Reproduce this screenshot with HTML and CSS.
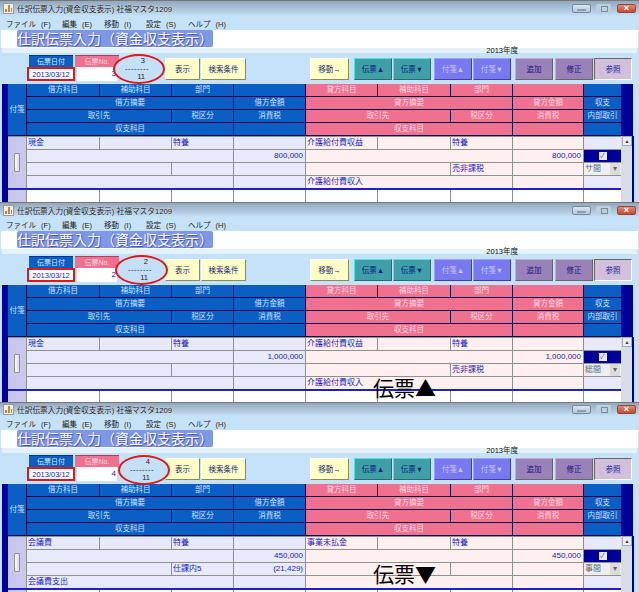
FILE: index.html
```html
<!DOCTYPE html>
<html lang="ja">
<head>
  <meta charset="UTF-8">
  <title>仕訳伝票入力</title>
  <link rel="stylesheet" href="styles.css">
</head>
<body>

  <section class="win win-1">
    <div class="titlebar">
      <svg class="app-icon" width="11" height="11" viewBox="0 0 11 11"><rect x="0.5" y="0.5" width="10" height="10" fill="#f4efe4" stroke="#9a9a9a"/><path d="M2 9V6h2v3zM5 9V2h2v7zM8 9V5h1v4z" fill="#c08a3c"/></svg>
      <span class="title-text">仕訳伝票入力(資金収支表示) 社福マスタ1209</span>
      <span class="ctl ctl-min"></span><span class="ctl ctl-max"></span><span class="ctl ctl-close">×</span>
    </div>
    <nav class="menu"><span>ファイル (F)</span><span>編集 (E)</span><span>移動 (I)</span><span>設定 (S)</span><span>ヘルプ (H)</span></nav>
    <div class="band"><h1>仕訳伝票入力（資金収支表示）</h1></div>
    <div class="yearbar"><span>2013年度</span></div>
    <div class="toolbar">
      <div class="field field-date"><span class="lbl lbl-blue">伝票日付</span><span class="input input-date">2013/03/12</span></div>
      <div class="field field-no"><span class="lbl lbl-pink">伝票No.</span><span class="input input-no">3</span></div>
      <div class="counter"><span>3</span><span class="dash">--------</span><span>11</span></div>
      <button class="btn yellow w35">表示</button>
      <button class="btn yellow w45">検索条件</button>
      <button class="btn yellow w39 ml64">移動→</button>
      <button class="btn teal ml5">伝票▲</button>
      <button class="btn teal">伝票▼</button>
      <button class="btn peri ml3">付箋▲</button>
      <button class="btn peri">付箋▼</button>
      <button class="btn purple ml4">追加</button>
      <button class="btn purple ml2">修正</button>
      <button class="btn lilac">参照</button>
    </div>
    <div class="sheet">
      <div class="head">
        <div class="hb tag">付箋</div>
        <div class="hb">借方科目</div><div class="hb">補助科目</div><div class="hb">部門</div><div class="hb"></div>
        <div class="hp">貸方科目</div><div class="hp">補助科目</div><div class="hp">部門</div><div class="hp"></div>
        <div class="hb"></div>
        <div class="hb s3">借方摘要</div><div class="hb">借方金額</div>
        <div class="hp s3">貸方摘要</div><div class="hp">貸方金額</div>
        <div class="hb">収支</div>
        <div class="hb s2">取引先</div><div class="hb">税区分</div><div class="hb">消費税</div>
        <div class="hp s2">取引先</div><div class="hp">税区分</div><div class="hp">消費税</div>
        <div class="hb">内部取引</div>
        <div class="hb s3">収支科目</div><div class="hb"></div>
        <div class="hp s3">収支科目</div><div class="hp"></div>
        <div class="hb"></div>
      </div>
      <div class="body">
        <div class="rows">
          <div class="entry">
            <div class="grip"><span></span></div>
            <div class="db">現金</div><div class="db"></div><div class="db">特養</div><div class="db"></div>
            <div class="dp">介護給付費収益</div><div class="dp"></div><div class="dp">特養</div><div class="dp"></div>
            <div class="db"></div>
            <div class="db s3"></div><div class="db num">800,000</div>
            <div class="dp s3"></div><div class="dp num">800,000</div>
            <div class="check"><span>✓</span></div>
            <div class="db s2"></div><div class="db"></div><div class="db"></div>
            <div class="dp s2"></div><div class="dp">売非課税</div><div class="dp"></div>
            <div class="sel">サ間<i>▾</i></div>
            <div class="db s3"></div><div class="db"></div>
            <div class="dp s3">介護給付費収入</div><div class="dp"></div>
            <div class="db"></div>
          </div>
          <div class="blank">
            <div class="grip"></div>
            <div></div><div></div><div></div><div></div><div></div><div></div><div></div><div></div><div></div>
          </div>
        </div>
        <div class="scroll"><span>▲</span></div>
      </div>
    </div>
  </section>

  <section class="win win-2">
    <div class="titlebar">
      <svg class="app-icon" width="11" height="11" viewBox="0 0 11 11"><rect x="0.5" y="0.5" width="10" height="10" fill="#f4efe4" stroke="#9a9a9a"/><path d="M2 9V6h2v3zM5 9V2h2v7zM8 9V5h1v4z" fill="#c08a3c"/></svg>
      <span class="title-text">仕訳伝票入力(資金収支表示) 社福マスタ1209</span>
      <span class="ctl ctl-min"></span><span class="ctl ctl-max"></span><span class="ctl ctl-close">×</span>
    </div>
    <nav class="menu"><span>ファイル (F)</span><span>編集 (E)</span><span>移動 (I)</span><span>設定 (S)</span><span>ヘルプ (H)</span></nav>
    <div class="band"><h1>仕訳伝票入力（資金収支表示）</h1></div>
    <div class="yearbar"><span>2013年度</span></div>
    <div class="toolbar">
      <div class="field field-date"><span class="lbl lbl-blue">伝票日付</span><span class="input input-date">2013/03/12</span></div>
      <div class="field field-no"><span class="lbl lbl-pink">伝票No.</span><span class="input input-no">2</span></div>
      <div class="counter"><span>2</span><span class="dash">--------</span><span>11</span></div>
      <button class="btn yellow w35">表示</button>
      <button class="btn yellow w45">検索条件</button>
      <button class="btn yellow w39 ml64">移動→</button>
      <button class="btn teal ml5">伝票▲</button>
      <button class="btn teal">伝票▼</button>
      <button class="btn peri ml3">付箋▲</button>
      <button class="btn peri">付箋▼</button>
      <button class="btn purple ml4">追加</button>
      <button class="btn purple ml2">修正</button>
      <button class="btn lilac">参照</button>
    </div>
    <div class="sheet">
      <div class="head">
        <div class="hb tag">付箋</div>
        <div class="hb">借方科目</div><div class="hb">補助科目</div><div class="hb">部門</div><div class="hb"></div>
        <div class="hp">貸方科目</div><div class="hp">補助科目</div><div class="hp">部門</div><div class="hp"></div>
        <div class="hb"></div>
        <div class="hb s3">借方摘要</div><div class="hb">借方金額</div>
        <div class="hp s3">貸方摘要</div><div class="hp">貸方金額</div>
        <div class="hb">収支</div>
        <div class="hb s2">取引先</div><div class="hb">税区分</div><div class="hb">消費税</div>
        <div class="hp s2">取引先</div><div class="hp">税区分</div><div class="hp">消費税</div>
        <div class="hb">内部取引</div>
        <div class="hb s3">収支科目</div><div class="hb"></div>
        <div class="hp s3">収支科目</div><div class="hp"></div>
        <div class="hb"></div>
      </div>
      <div class="body">
        <div class="rows">
          <div class="entry">
            <div class="grip"><span></span></div>
            <div class="db">現金</div><div class="db"></div><div class="db">特養</div><div class="db"></div>
            <div class="dp">介護給付費収益</div><div class="dp"></div><div class="dp">特養</div><div class="dp"></div>
            <div class="db"></div>
            <div class="db s3"></div><div class="db num">1,000,000</div>
            <div class="dp s3"></div><div class="dp num">1,000,000</div>
            <div class="check"><span>✓</span></div>
            <div class="db s2"></div><div class="db"></div><div class="db"></div>
            <div class="dp s2"></div><div class="dp">売非課税</div><div class="dp"></div>
            <div class="sel">総間<i>▾</i></div>
            <div class="db s3"></div><div class="db"></div>
            <div class="dp s3">介護給付費収入</div><div class="dp"></div>
            <div class="db"></div>
          </div>
          <div class="blank">
            <div class="grip"></div>
            <div></div><div></div><div></div><div></div><div></div><div></div><div></div><div></div><div></div>
          </div>
        </div>
        <div class="scroll"><span>▲</span></div>
      </div>
    </div>
    <div class="note">伝票▲</div>
  </section>

  <section class="win win-3">
    <div class="titlebar">
      <svg class="app-icon" width="11" height="11" viewBox="0 0 11 11"><rect x="0.5" y="0.5" width="10" height="10" fill="#f4efe4" stroke="#9a9a9a"/><path d="M2 9V6h2v3zM5 9V2h2v7zM8 9V5h1v4z" fill="#c08a3c"/></svg>
      <span class="title-text">仕訳伝票入力(資金収支表示) 社福マスタ1209</span>
      <span class="ctl ctl-min"></span><span class="ctl ctl-max"></span><span class="ctl ctl-close">×</span>
    </div>
    <nav class="menu"><span>ファイル (F)</span><span>編集 (E)</span><span>移動 (I)</span><span>設定 (S)</span><span>ヘルプ (H)</span></nav>
    <div class="band"><h1>仕訳伝票入力（資金収支表示）</h1></div>
    <div class="yearbar"><span>2013年度</span></div>
    <div class="toolbar">
      <div class="field field-date"><span class="lbl lbl-blue">伝票日付</span><span class="input input-date">2013/03/12</span></div>
      <div class="field field-no"><span class="lbl lbl-pink">伝票No.</span><span class="input input-no">4</span></div>
      <div class="counter"><span>4</span><span class="dash">--------</span><span>11</span></div>
      <button class="btn yellow w35">表示</button>
      <button class="btn yellow w45">検索条件</button>
      <button class="btn yellow w39 ml64">移動→</button>
      <button class="btn teal ml5">伝票▲</button>
      <button class="btn teal">伝票▼</button>
      <button class="btn peri ml3">付箋▲</button>
      <button class="btn peri">付箋▼</button>
      <button class="btn purple ml4">追加</button>
      <button class="btn purple ml2">修正</button>
      <button class="btn lilac">参照</button>
    </div>
    <div class="sheet">
      <div class="head">
        <div class="hb tag">付箋</div>
        <div class="hb">借方科目</div><div class="hb">補助科目</div><div class="hb">部門</div><div class="hb"></div>
        <div class="hp">貸方科目</div><div class="hp">補助科目</div><div class="hp">部門</div><div class="hp"></div>
        <div class="hb"></div>
        <div class="hb s3">借方摘要</div><div class="hb">借方金額</div>
        <div class="hp s3">貸方摘要</div><div class="hp">貸方金額</div>
        <div class="hb">収支</div>
        <div class="hb s2">取引先</div><div class="hb">税区分</div><div class="hb">消費税</div>
        <div class="hp s2">取引先</div><div class="hp">税区分</div><div class="hp">消費税</div>
        <div class="hb">内部取引</div>
        <div class="hb s3">収支科目</div><div class="hb"></div>
        <div class="hp s3">収支科目</div><div class="hp"></div>
        <div class="hb"></div>
      </div>
      <div class="body">
        <div class="rows">
          <div class="entry">
            <div class="grip"><span></span></div>
            <div class="db">会議費</div><div class="db"></div><div class="db">特養</div><div class="db"></div>
            <div class="dp">事業未払金</div><div class="dp"></div><div class="dp">特養</div><div class="dp"></div>
            <div class="db"></div>
            <div class="db s3"></div><div class="db num">450,000</div>
            <div class="dp s3"></div><div class="dp num">450,000</div>
            <div class="check"><span>✓</span></div>
            <div class="db s2"></div><div class="db">仕課内5</div><div class="db num">(21,429)</div>
            <div class="dp s2"></div><div class="dp"></div><div class="dp"></div>
            <div class="sel">事間<i>▾</i></div>
            <div class="db s3">会議費支出</div><div class="db"></div>
            <div class="dp s3"></div><div class="dp"></div>
            <div class="db"></div>
          </div>
          <div class="blank">
            <div class="grip"></div>
            <div></div><div></div><div></div><div></div><div></div><div></div><div></div><div></div><div></div>
          </div>
        </div>
        <div class="scroll"><span>▲</span></div>
      </div>
    </div>
    <div class="note">伝票▼</div>
  </section>

</body>
</html>
```

FILE: styles.css
```css
body {
  margin: 0;
  width: 639px;
  height: 592px;
  overflow: hidden;
  background: #fff;
  font-family: "Liberation Sans", "Noto Sans CJK JP", sans-serif;
  font-size: 8px;
}

.win {
  position: relative;
  overflow: hidden;
  box-sizing: border-box;
  background: #c6e2f8;
  padding: 0 2px;
}
.win-1 { height: 202px; }
.win-2 { height: 200px; }
.win-3 { height: 190px; }

/* title bar */
.titlebar {
  margin: 0 -2px;
  height: 16px;
  padding: 0 3px;
  display: flex;
  align-items: center;
  gap: 3px;
  background: linear-gradient(#93a8bc, #b4cde3 70%, #c6e2f8);
  border-top: 1px solid #777;
  box-sizing: border-box;
}
.win-2 .titlebar { height: 15px; }
.win-3 .titlebar { height: 14px; }
.title-text {
  flex: 1;
  color: #222;
  font-size: 7.7px;
  text-shadow: 0 0 2px #e8f2fa;
}
.ctl {
  position: relative;
  height: 9px;
  box-sizing: border-box;
  border: 1px solid #75899c;
  border-radius: 2px;
  background: linear-gradient(#dbe6ef, #b4c6d6);
  color: #fff;
  font-size: 9px;
  font-weight: 700;
  line-height: 7px;
  text-align: center;
}
.ctl-min { width: 19px; margin-right: 2px; }
.ctl-min::after {
  content: "";
  position: absolute;
  left: 4px;
  top: 4px;
  width: 9px;
  height: 2px;
  background: #8ea0b0;
}
.ctl-max { width: 15px; margin-right: 3px; border-color: transparent; background: #bdd0e0; }
.ctl-max::after {
  content: "";
  position: absolute;
  left: 4px;
  top: 1px;
  width: 5px;
  height: 4px;
  border: 1px solid #7a8a98;
}
.ctl-close { width: 19px; background: linear-gradient(#e08a70, #c84a30); border-color: #8f4a3c; }

.menu {
  height: 14px;
  display: flex;
  align-items: center;
  padding-left: 4px;
  background: #c6e2f8;
  font-size: 7.5px;
  color: #222;
}
.menu span { width: 42px; white-space: nowrap; word-spacing: 3px; }
.menu span:first-child { width: 56px; }

.band {
  height: 18px;
  background: #fff;
  margin: 0 -1px;
  padding-left: 16px;
  display: flex;
}
.band h1 {
  margin: 0;
  height: 17px;
  width: 196px;
  background: #7f97ea;
  border-radius: 2px;
  color: #fff;
  font-family: "Noto Sans CJK JP", sans-serif;
  font-size: 14px;
  font-weight: 400;
  line-height: 17px;
  white-space: nowrap;
  text-align: center;
  text-shadow: 1px 1px 1px #3c4fa0;
}

.yearbar {
  height: 5px;
  background: #e3f1fb;
  display: flex;
  justify-content: flex-end;
  padding-right: 119px;
  line-height: 6px;
  font-size: 7.5px;
  color: #111;
}

/* toolbar */
.toolbar {
  position: relative;
  height: 31px;
  display: flex;
  align-items: center;
  padding-left: 25px;
}
.field { display: flex; flex-direction: column; align-items: center; margin-top: -1px; }
.field-date { width: 48px; }
.field-no { width: 44px; }
.lbl {
  height: 11px;
  width: 44px;
  line-height: 11px;
  text-align: center;
  font-size: 7px;
  color: #d8e8ff;
}
.lbl-blue { background: #0a5ec4; border-top: 1px solid #00309a; }
.lbl-pink { background: #f0708f; color: #ffd8e2; border-top: 1px solid #b04060; }
.input {
  height: 14px;
  box-sizing: border-box;
  line-height: 12px;
  background: #fff;
  color: #2020c0;
}
.input-date {
  width: 48px;
  border: 2px solid #e01818;
  font-size: 7.5px;
  text-align: center;
}
.input-no { width: 40px; padding-right: 1px; line-height: 14px; text-align: right; }

/* 件数の楕円 (over the No. field) */
.counter {
  position: absolute;
  top: 1px;
  width: 52px;
  height: 30px;
  box-sizing: border-box;
  border: 2px solid #e01818;
  border-radius: 50%;
  background: #c4e0f8;
  display: flex;
  flex-direction: column;
  align-items: flex-end;
  justify-content: center;
  padding-right: 18px;
  font-size: 7.5px;
  line-height: 8px;
  color: #222;
}
.counter .dash { letter-spacing: 0.5px; margin-right: -4px; }
.win-1 .counter { left: 111px; }
.win-2 .counter { left: 113px; width: 53px; }
.win-3 .counter { left: 116px; top: 2px; }

.btn {
  height: 22px;
  width: 38px;
  padding: 0;
  margin: 0 0 0 1px;
  font-family: inherit;
  font-size: 7.5px;
  white-space: nowrap;
  border: 1px solid;
  box-sizing: border-box;
}
.yellow { background: #ffffc6; color: #222a70; border-color: #fff #8a8a60 #8a8a60 #fff; }
.teal { background: #3fa0a8; color: #0a1a80; border-color: #50e0e8 #2a6a70 #2a6a70 #50e0e8; }
.peri { background: #7878f0; color: #c8c8ff; border-color: #a0a0ff #4040a0 #4040a0 #a0a0ff; }
.purple { background: #9a82b8; color: #141480; border-color: #c0b0d0 #666 #666 #c0b0d0; }
.lilac { background: #d2bfdc; color: #20208a; border-color: #666 #fff #fff #666; }
.w35 { width: 35px; margin-left: 0; }
.w45 { width: 45px; }
.w39 { width: 39px; }
.ml64 { margin-left: 64px; }
.ml5 { margin-left: 5px; }
.ml4 { margin-left: 4px; }
.ml3 { margin-left: 3px; }
.ml2 { margin-left: 2px; }
.toolbar .w35 { margin-left: 46px; }

/* ledger */
.sheet {
  height: 120px;
  padding-left: 6px;
  background: linear-gradient(90deg, #00009a 6px, transparent 6px);
}
.head, .entry, .blank {
  display: grid;
  grid-template-columns: 18px 72px 71px 61px 71px 71px 72px 61px 70px 37px;
  column-gap: 1px;
}
.head {
  grid-auto-rows: 12px;
  row-gap: 1px;
  padding-bottom: 1px;
  background: #0a0a50;
  box-shadow: 12px 0 0 #00009a;
  width: 613px;
}
.hb, .hp {
  text-align: center;
  font-size: 7.5px;
  line-height: 12px;
  white-space: nowrap;
  overflow: hidden;
}
.hb { background: #0a5ec4; color: #cfe2ff; }
.hp { background: #f0708f; color: #ffdbe4; }
.tag { grid-row: span 4; line-height: 51px; }
.s2 { grid-column: span 2; }
.s3 { grid-column: span 3; }

.body { display: flex; }
.rows { width: 613px; }
.entry {
  grid-auto-rows: 12px;
  row-gap: 1px;
  padding-top: 1px;
  background: #909090;
  border-bottom: 2px solid #2020c0;
}
.db, .dp, .sel, .check {
  line-height: 12px;
  padding: 0 1px;
  font-size: 8px;
  color: #1a1ac8;
  white-space: nowrap;
  overflow: hidden;
}
.db { background: #e6eafb; }
.dp { background: #fdf0ee; }
.num { text-align: right; padding-right: 2px; }
.grip {
  grid-row: span 4;
  background: #c8c8ee;
  display: flex;
  align-items: center;
  justify-content: center;
}
.grip span {
  width: 4px;
  height: 17px;
  background: linear-gradient(90deg, #fff, #d8d8d8);
  border: 1px solid #909090;
  border-radius: 1px;
}
.check {
  background: #00009a;
  display: flex;
  align-items: center;
  justify-content: center;
}
.check span {
  width: 8px;
  height: 8px;
  background: #e8e8f0;
  color: #666;
  font-size: 7px;
  line-height: 8px;
  text-align: center;
}
.sel {
  background: #eeeeee;
  color: #666;
  display: flex;
  justify-content: space-between;
}
.sel i { font-style: normal; width: 10px; text-align: center; background: #dcdcdc; }

.blank {
  grid-auto-rows: 40px;
  background: #909090;
}
.blank div { background: #fff; }
.blank .grip { background: #c8c8ee; }

.scroll {
  width: 10px;
  height: 70px;
  margin-left: 1px;
  background: #d8dde4;
  border-right: 2px solid #00009a;
}
.scroll span {
  display: block;
  height: 10px;
  background: #e8eef4;
  border: 1px solid #aaa;
  box-sizing: border-box;
  font-size: 5px;
  line-height: 8px;
  text-align: center;
  color: #333;
}

.note {
  position: absolute;
  left: 373px;
  font-family: "Noto Sans CJK JP", sans-serif;
  font-size: 21px;
  line-height: 22px;
  color: #000;
}
.win-2 .note { top: 174px; }
.win-3 .note { top: 160px; }
```
